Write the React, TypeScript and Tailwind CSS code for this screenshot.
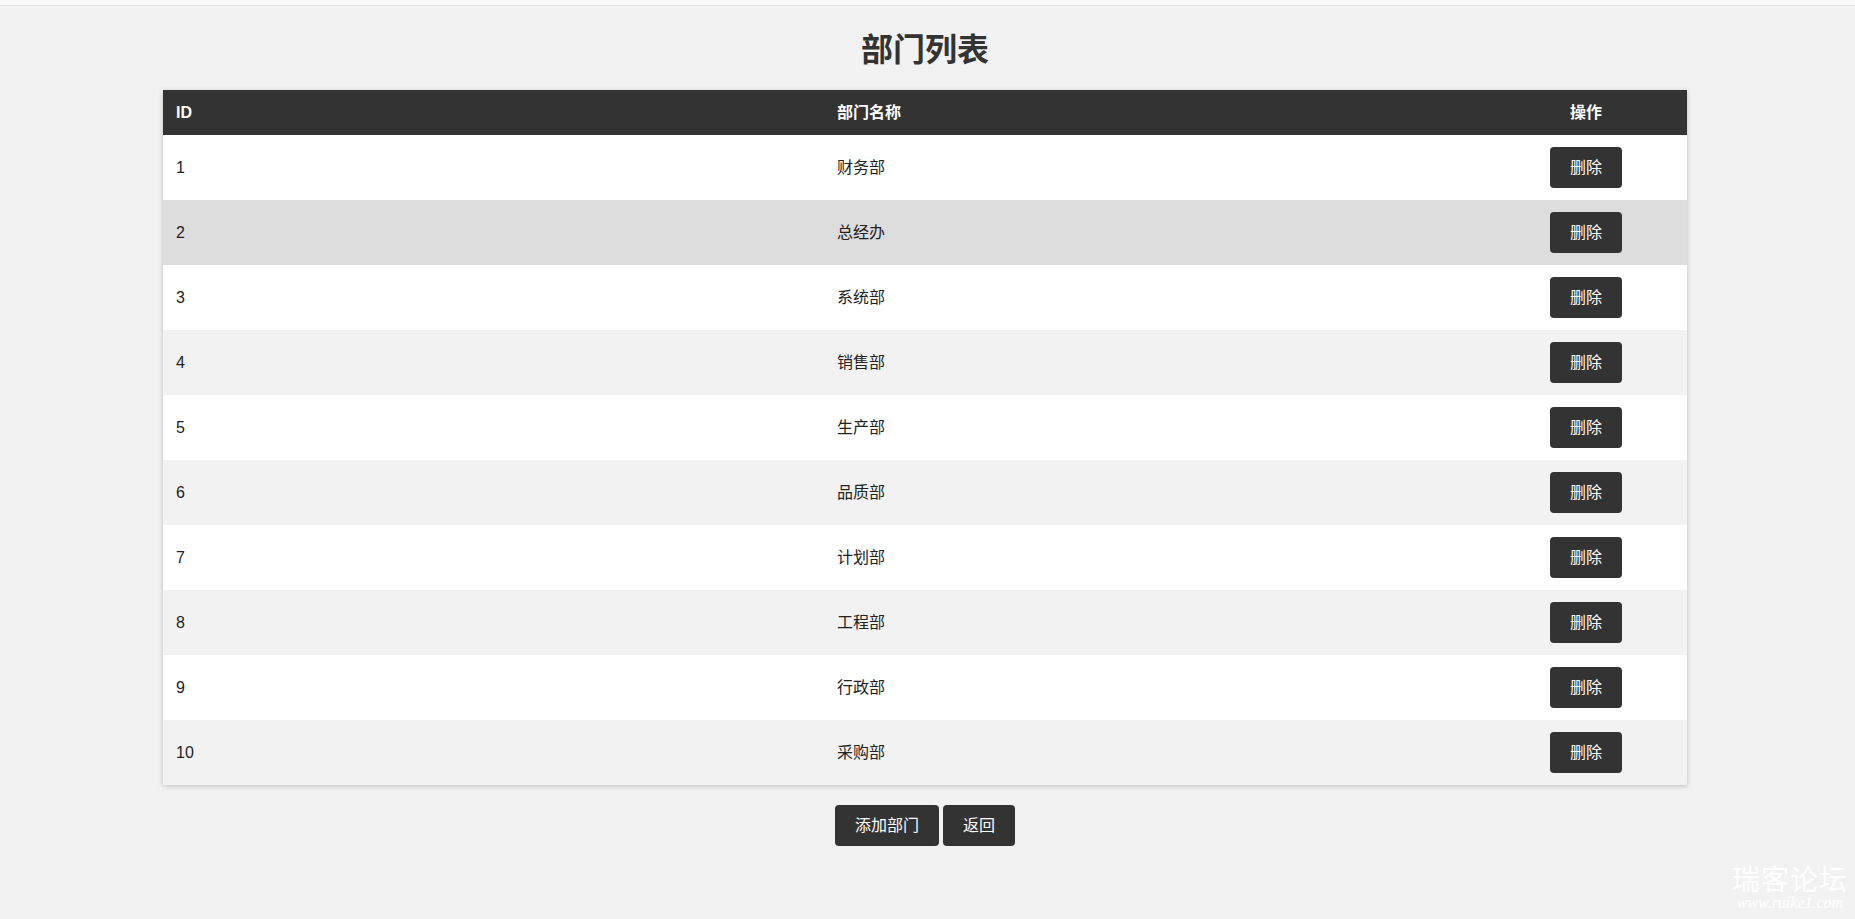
const departments = [
  { id: 1, name: '财务部' },
  { id: 2, name: '总经办' },
  { id: 3, name: '系统部' },
  { id: 4, name: '销售部' },
  { id: 5, name: '生产部' },
  { id: 6, name: '品质部' },
  { id: 7, name: '计划部' },
  { id: 8, name: '工程部' },
  { id: 9, name: '行政部' },
  { id: 10, name: '采购部' },
]

function rowBg(i: number) {
  // second row is the hovered one in the screenshot
  if (i === 1) return 'bg-[#dddddd]'
  return i % 2 === 0 ? 'bg-white' : 'bg-[#f2f2f2]'
}

const btn = 'h-[41px] rounded-[4px] bg-[#333] px-[20px] text-[16px] leading-[41px] text-white'

export default function App() {
  return (
    <div
      className="relative min-h-[919px] bg-[#f2f2f2] text-[#333] overflow-hidden"
      style={{ fontFamily: '"Liberation Sans", Arial, "Noto Sans CJK SC", sans-serif' }}
    >
      <div className="h-[6px] bg-[#f9f9fa] border-b border-[#e2e2e2]" />

      <div className="w-[1850px]">
        <h1 className="mt-[20px] mb-[16px] text-center text-[32px] leading-[48px] font-bold text-[#333]">部门列表</h1>

        <div className="mx-auto w-[1524px] bg-white shadow-[0_1px_5px_rgba(0,0,0,0.22)]">
          <table className="w-full table-fixed border-collapse text-[16px]">
            <colgroup>
              <col className="w-[662px]" />
              <col className="w-[660px]" />
              <col className="w-[202px]" />
            </colgroup>
            <thead>
              <tr className="h-[45px] bg-[#333] text-white">
                <th className="px-[13px] text-left font-bold">ID</th>
                <th className="px-[12px] text-left font-bold">部门名称</th>
                <th className="px-[12px] text-center font-bold">操作</th>
              </tr>
            </thead>
            <tbody>
              {departments.map((d, i) => (
                <tr key={d.id} className={`h-[65px] ${rowBg(i)}`}>
                  <td className="h-[65px] px-[13px] text-[#222]">{d.id}</td>
                  <td className="px-[12px] text-[#222]">{d.name}</td>
                  <td className="px-[12px] text-center">
                    <button className={btn}>删除</button>
                  </td>
                </tr>
              ))}
            </tbody>
          </table>
        </div>

        <div className="mt-[20px] flex justify-center gap-[4px]">
          <button className={btn}>添加部门</button>
          <button className={btn}>返回</button>
        </div>
      </div>

      <div className="absolute right-[7px] bottom-[9px] flex flex-col items-center text-white/90 pointer-events-none">
        <span className="text-[28px] leading-[30px] tracking-[1px]">瑞客论坛</span>
        <span className="text-[16px] leading-[14px] italic" style={{ fontFamily: '"Liberation Serif", serif' }}>
          www.ruike1.com
        </span>
      </div>
    </div>
  )
}
